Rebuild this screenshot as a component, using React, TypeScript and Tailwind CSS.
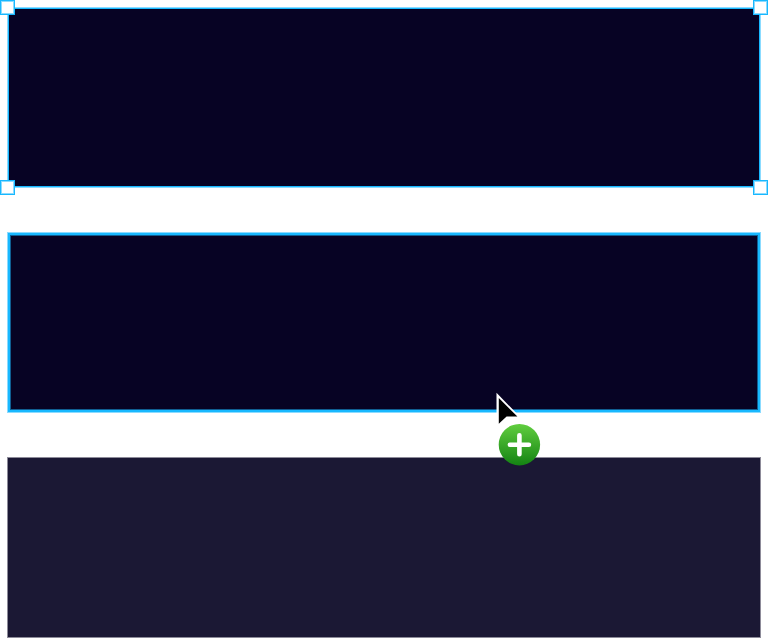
function Handle({ className }: { className: string }) {
  return (
    <span className={`absolute size-[15px] border border-[#18b8ff] bg-white ${className}`}>
      <span className="block size-full border border-[#8bdbff]" />
    </span>
  );
}

function CopyCursor() {
  return (
    <svg className="absolute left-[480px] top-[380px]" width="80" height="100" viewBox="0 0 80 100">
      <defs>
        <linearGradient id="badge" x1="0" y1="0" x2="0" y2="1">
          <stop offset="0" stopColor="#61ce3f" />
          <stop offset="1" stopColor="#148313" />
        </linearGradient>
      </defs>
      <path d="M16.5 12.8V47L27.2 38.2H41.3Z" fill="white" />
      <path d="M18.8 18V43.7L26.6 36.6H37.4Z" fill="black" />
      <circle cx="39.4" cy="64.7" r="20.7" fill="url(#badge)" />
      <path d="M39.4 55.2V74.2M29.9 64.7H48.9" stroke="white" strokeWidth="4.6" strokeLinecap="round" />
    </svg>
  );
}

export default function App() {
  return (
    <main className="relative flex h-[638px] w-[768px] flex-col overflow-hidden bg-white px-[7px] pt-[7px] font-['Liberation_Sans',sans-serif]">
      <section className="relative h-[181px] shrink-0 border border-[#8bdbff]">
        <div className="h-full border border-[#18b8ff] bg-[#070324]" />
        <Handle className="-left-2 -top-2" />
        <Handle className="-right-2 -top-2" />
        <Handle className="-bottom-2 -left-2" />
        <Handle className="-bottom-2 -right-2" />
      </section>
      <section className="mt-[44px] h-[181px] shrink-0 border border-[#8bdbff]">
        <div className="h-full border-2 border-[#18b8ff]">
          <div className="h-full border border-[#105e92] bg-[#070324]" />
        </div>
      </section>
      <section className="mt-[44px] h-[181px] shrink-0 border border-[#8d8b99] bg-[#1b1834]" />
      <CopyCursor />
    </main>
  );
}
